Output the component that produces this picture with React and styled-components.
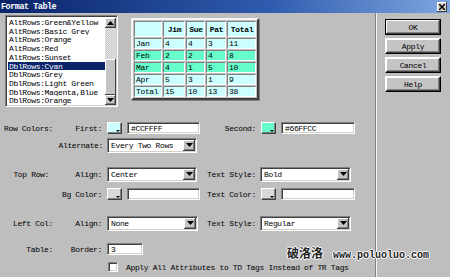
import React from 'react';
import styled, { createGlobalStyle } from 'styled-components';

const GlobalStyle = createGlobalStyle`
  html, body { margin: 0; padding: 0; background: #bebebe; }
  body {
    font-family: "Liberation Mono", "DejaVu Sans Mono", monospace;
    font-size: 8px;
    letter-spacing: -0.35px;
    color: #000;
  }
`;

const Window = styled.div`
  position: relative;
  width: 450px;
  height: 277px;
  background: #bebebe;
  display: flex;
  flex-direction: column;
  overflow: hidden;
`;

const TitleBar = styled.div`
  height: 13px;
  display: flex;
  align-items: center;
  justify-content: space-between;
  padding: 0 3px 0 1px;
  background: linear-gradient(to right, #0a246a, #2f5cae 60%, #7ea6e0);
`;

const Title = styled.span`
  color: #fff;
  font-weight: bold;
  font-size: 8.5px;
  letter-spacing: -0.5px;
`;

const CloseBtn = styled.div`
  width: 10px;
  height: 10px;
  box-sizing: border-box;
  background: #d4d0c8;
  box-shadow: inset -1px -1px #404040, inset 1px 1px #fff;
  display: flex;
  align-items: center;
  justify-content: center;
`;

const Body = styled.div`
  flex: 1;
  display: flex;
`;

const Main = styled.div`
  width: 375px;
  display: flex;
  flex-direction: column;
`;

const Divider = styled.div`
  width: 1px;
  border-left: 1px solid #808080;
  background: #f4f4f4;
`;

const Side = styled.div`
  display: flex;
  flex-direction: column;
  gap: 3px;
  padding: 6px 0 0 8px;
`;

const Button = styled.div`
  width: 56px;
  height: 16px;
  box-sizing: border-box;
  display: flex;
  align-items: center;
  justify-content: center;
  background: #c4c4c4;
  border: 1px solid ${p => (p.$default ? '#000' : 'transparent')};
  box-shadow: inset -1px -1px #404040, inset 1px 1px #fff, inset -2px -2px #808080;
  ${p => !p.$default && 'border-color: #fff #000 #000 #fff;'}
`;

const Top = styled.div`
  height: 105px;
  display: flex;
  padding: 2px 0 0 5px;
`;

const ListBox = styled.div`
  width: 113px;
  height: 92px;
  box-sizing: border-box;
  display: flex;
  background: #fff;
  border: 1px solid;
  border-color: #808080 #fff #fff #808080;
  box-shadow: inset 1px 1px #404040, inset -1px -1px #d4d0c8;
  padding: 2px 1px 1px 2px;
  overflow: hidden;
`;

const Items = styled.div`
  flex: 1;
  display: flex;
  flex-direction: column;
`;

const Item = styled.div`
  height: 8.8px;
  line-height: 9px;
  padding-left: 1px;
  white-space: nowrap;
  overflow: hidden;
  background: ${p => (p.$active ? '#0a246a' : 'transparent')};
  color: ${p => (p.$active ? '#fff' : '#000')};
`;

const ScrollBar = styled.div`
  width: 11px;
  display: flex;
  flex-direction: column;
  background: repeating-conic-gradient(#e8e8e8 0 25%, #c8c8c8 0 50%) 0 0 / 2px 2px;
`;

const ScrollBtn = styled.div`
  height: 10px;
  box-sizing: border-box;
  background: #c4c4c4;
  box-shadow: inset -1px -1px #404040, inset 1px 1px #fff, inset -2px -2px #808080;
  display: flex;
  align-items: center;
  justify-content: center;
`;

const Track = styled.div`
  flex: 1;
  display: flex;
  flex-direction: column;
  justify-content: flex-end;
`;

const Thumb = styled.div`
  height: 36px;
  background: #c4c4c4;
  box-shadow: inset -1px -1px #404040, inset 1px 1px #fff;
`;

const Preview = styled.div`
  margin-left: 9px;
  padding: 3px 4px;
`;

const Grid = styled.table`
  border-collapse: separate;
  border-spacing: 1px;
  table-layout: fixed;
  border: 2px solid;
  border-color: #f4f4f4 #404040 #404040 #f4f4f4;
  background: #c0c0c0;
  box-shadow: 1px 1px #808080;
`;

const Cell = styled.td`
  width: ${p => p.$w}px;
  height: ${p => (p.$head ? 14 : 9)}px;
  padding: 0 0 0 1px;
  border: 1px solid;
  border-color: #808080 #fff #fff #808080;
  background: ${p => p.$bg};
  font-weight: ${p => (p.$head ? 'bold' : 'normal')};
  text-align: ${p => (p.$center ? 'center' : 'left')};
  font-size: 8px;
  line-height: 9px;
  white-space: nowrap;
  overflow: hidden;
`;

const Form = styled.div`
  display: flex;
  flex-direction: column;
`;

const Row = styled.div`
  display: grid;
  grid-template-columns: 55px 50px 96px 57px 100px;
  height: 16px;
  align-items: center;
  margin-top: ${p => p.$mt || 0}px;
`;

const Label = styled.div`
  text-align: right;
  padding-right: ${p => p.$pr ?? 3}px;
  white-space: nowrap;
`;

const Control = styled.div`
  display: flex;
  align-items: center;
  gap: 5px;
  padding-left: ${p => p.$pl ?? 2}px;
  ${p => p.$span && 'grid-column: 3 / -1;'}
`;

const Field = styled.div`
  width: ${p => p.$w}px;
  height: ${p => p.$h || 12}px;
  box-sizing: border-box;
  background: #fff;
  border: 1px solid;
  border-color: #808080 #fff #fff #808080;
  box-shadow: inset 1px 1px #404040, inset -1px -1px #d4d0c8;
  padding-left: 3px;
  display: flex;
  align-items: center;
  justify-content: space-between;
  white-space: nowrap;
`;

const DropBtn = styled.div`
  width: 12px;
  height: 11px;
  margin-right: 1px;
  box-sizing: border-box;
  background: #c4c4c4;
  box-shadow: inset -1px -1px #404040, inset 1px 1px #fff, inset -2px -2px #808080;
  display: flex;
  align-items: center;
  justify-content: center;
`;

const Swatch = styled.div`
  position: relative;
  width: 15px;
  height: 12px;
  box-sizing: border-box;
  border: 1px solid;
  border-color: #fff #404040 #404040 #fff;
  background: ${p => p.$c};
  box-shadow: inset -1px -1px #808080;
  &::after {
    content: '';
    position: absolute;
    right: 1px;
    bottom: 1px;
    border-left: 2px solid transparent;
    border-right: 2px solid transparent;
    border-top: 2px solid #000;
  }
`;

const Check = styled.div`
  width: 10px;
  height: 10px;
  box-sizing: border-box;
  background: #fff;
  border: 1px solid;
  border-color: #808080 #fff #fff #808080;
  box-shadow: inset 1px 1px #404040, inset -1px -1px #d4d0c8;
  margin-right: 3px;
`;

const Watermark = styled.div`
  position: absolute;
  left: 287px;
  top: 244px;
  display: flex;
  align-items: baseline;
  gap: 10px;
  color: #222;
  font-weight: bold;
  letter-spacing: 0;
  text-shadow: 1px 0 #fff, -1px 0 #fff, 0 1px #fff, 0 -1px #fff;
`;

const WmCn = styled.span`
  font-family: "Noto Sans CJK SC", sans-serif;
  font-size: 12px;
`;

const WmUrl = styled.span`
  font-size: 10px;
`;

const Arrow = ({ up }) => (
  <svg width="7" height="4" viewBox="0 0 7 4">
    <path d={up ? 'M0 4 L3.5 0 L7 4 Z' : 'M0 0 L7 0 L3.5 4 Z'} fill="#000" />
  </svg>
);

const Select = ({ w, value }) => (
  <Field $w={w} $h={15}>
    <span>{value}</span>
    <DropBtn><Arrow /></DropBtn>
  </Field>
);

const presets = [
  'AltRows:Green&Yellow',
  'AltRows:Basic Grey',
  'AltRows:Orange',
  'AltRows:Red',
  'AltRows:Sunset',
  'DblRows:Cyan',
  'DblRows:Grey',
  'DblRows:Light Green',
  'DblRows:Magenta,Blue',
  'DblRows:Orange',
];

const widths = [25, 19, 16, 17, 26];
const rows = [
  ['Jan', 4, 4, 3, 11, '#ccffff'],
  ['Feb', 2, 2, 4, 8, '#66ffcc'],
  ['Mar', 4, 1, 5, 10, '#66ffcc'],
  ['Apr', 5, 3, 1, 9, '#ccffff'],
  ['Total', 15, 10, 13, 38, '#ccffff'],
];

export default function App() {
  return (
    <Window>
      <GlobalStyle />
      <TitleBar>
        <Title>Format Table</Title>
        <CloseBtn>
          <svg width="6" height="6" viewBox="0 0 6 6">
            <path d="M0 0 L6 6 M6 0 L0 6" stroke="#000" strokeWidth="1.5" />
          </svg>
        </CloseBtn>
      </TitleBar>
      <Body>
        <Main>
          <Top>
            <ListBox>
              <Items>
                {presets.map((p, i) => (
                  <Item key={i} $active={p === 'DblRows:Cyan'}>{p}</Item>
                ))}
              </Items>
              <ScrollBar>
                <ScrollBtn><Arrow up /></ScrollBtn>
                <Track><Thumb /></Track>
                <ScrollBtn><Arrow /></ScrollBtn>
              </ScrollBar>
            </ListBox>
            <Preview>
              <Grid>
                <tbody>
                  <tr>
                    {['', 'Jim', 'Sue', 'Pat', 'Total'].map((h, i) => (
                      <Cell key={i} $head $center $w={widths[i]} $bg="#ccffff">{h}</Cell>
                    ))}
                  </tr>
                  {rows.map(r => (
                    <tr key={r[0]}>
                      {r.slice(0, 5).map((v, i) => (
                        <Cell key={i} $bg={r[5]}>{v}</Cell>
                      ))}
                    </tr>
                  ))}
                </tbody>
              </Grid>
            </Preview>
          </Top>
          <Form>
            <Row $mt={0}>
              <Label $pr={2}>Row Colors:</Label>
              <Label>First:</Label>
              <Control>
                <Swatch $c="#ccffff" />
                <Field $w={73}>#CCFFFF</Field>
              </Control>
              <Label $pr={2}>Second:</Label>
              <Control $pl={3}>
                <Swatch $c="#66ffcc" />
                <Field $w={74}>#66FFCC</Field>
              </Control>
            </Row>
            <Row $mt={1}>
              <div />
              <Label $pr={2}>Alternate:</Label>
              <Control>
                <Select w={90} value="Every Two Rows" />
              </Control>
            </Row>
            <Row $mt={13}>
              <Label $pr={6}>Top Row:</Label>
              <Label>Align:</Label>
              <Control>
                <Select w={90} value="Center" />
              </Control>
              <Label $pr={2}>Text Style:</Label>
              <Control>
                <Select w={91} value="Bold" />
              </Control>
            </Row>
            <Row $mt={4}>
              <div />
              <Label>Bg Color:</Label>
              <Control>
                <Swatch $c="#d8d8d8" />
                <Field $w={73} />
              </Control>
              <Label $pr={2}>Text Color:</Label>
              <Control $pl={3}>
                <Swatch $c="#d8d8d8" />
                <Field $w={74} />
              </Control>
            </Row>
            <Row $mt={13}>
              <Label $pr={2}>Left Col:</Label>
              <Label>Align:</Label>
              <Control>
                <Select w={91} value="None" />
              </Control>
              <Label $pr={2}>Text Style:</Label>
              <Control>
                <Select w={91} value="Regular" />
              </Control>
            </Row>
            <Row $mt={10}>
              <Label $pr={2}>Table:</Label>
              <Label>Border:</Label>
              <Control>
                <Field $w={36}>3</Field>
              </Control>
            </Row>
            <Row $mt={2}>
              <div />
              <div />
              <Control $span $pl={3}>
                <Check />
                <span>Apply All Attributes to TD Tags Instead of TR Tags</span>
              </Control>
            </Row>
          </Form>
        </Main>
        <Divider />
        <Side>
          <Button $default>OK</Button>
          <Button>Apply</Button>
          <Button>Cancel</Button>
          <Button>Help</Button>
        </Side>
      </Body>
      <Watermark>
        <WmCn>破洛洛</WmCn>
        <WmUrl>www.poluoluo.com</WmUrl>
      </Watermark>
    </Window>
  );
}
